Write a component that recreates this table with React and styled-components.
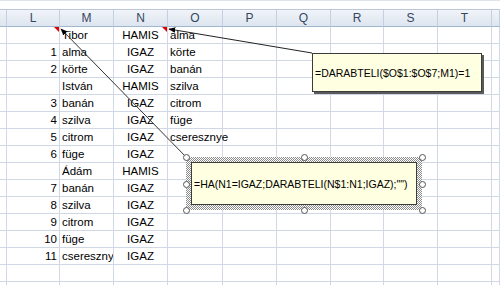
import React from "react";
import styled, { createGlobalStyle } from "styled-components";

const GlobalStyle = createGlobalStyle`
	body {
		margin: 0;
		background: #fff;
		font-family: "Liberation Sans", Arial, sans-serif;
		overflow: hidden;
	}
`;

const COLS = ["7px", "53px", "54px", "54px", "55px", "54px", "54px", "53px", "54px", "54px", "1fr"];
const LETTERS = ["", "L", "M", "N", "O", "P", "Q", "R", "S", "T", ""];

const rows = [
	["", "Tibor", "HAMIS", "alma"],
	["1", "alma", "IGAZ", "körte"],
	["2", "körte", "IGAZ", "banán"],
	["", "István", "HAMIS", "szilva"],
	["3", "banán", "IGAZ", "citrom"],
	["4", "szilva", "IGAZ", "füge"],
	["5", "citrom", "IGAZ", "cseresznye"],
	["6", "füge", "IGAZ", ""],
	["", "Ádám", "HAMIS", ""],
	["7", "banán", "IGAZ", ""],
	["8", "szilva", "IGAZ", ""],
	["9", "citrom", "IGAZ", ""],
	["10", "füge", "IGAZ", ""],
	["11", "cseresznye", "IGAZ", ""],
	["", "", "", ""],
	["", "", "", ""],
];

const Page = styled.div`
	position: relative;
	width: 500px;
	height: 285px;
	overflow: hidden;
	background: #fff;
	border-top: 1px solid #dfe4eb;
	box-sizing: border-box;
`;

const Spacer = styled.div`
	height: 8px;
`;

const Grid = styled.div`
	display: grid;
	grid-template-columns: ${COLS.join(" ")};
`;

const HeaderCell = styled.div`
	height: 18px;
	box-sizing: border-box;
	border-top: 1px solid #b9c7d9;
	border-bottom: 1px solid #9eb6ce;
	border-right: 1px solid #c3d0e1;
	background: linear-gradient(#f1f4f9, #dde5ef);
	color: #34475f;
	font-size: 12px;
	line-height: 16px;
	text-align: center;
`;

const Cell = styled.div`
	position: relative;
	height: 17px;
	box-sizing: border-box;
	border-right: 1px solid #d0d7e5;
	border-bottom: 1px solid #d0d7e5;
	font-size: 11.5px;
	line-height: 17px;
	color: #000;
	white-space: nowrap;
	padding: 0 2px;
	text-align: ${(p) => p.$align || "left"};
	overflow: ${(p) => (p.$spill ? "visible" : "hidden")};
`;

const Marker = styled.span`
	position: absolute;
	top: 0;
	right: 0;
	width: 0;
	height: 0;
	border-top: 5px solid #e00000;
	border-left: 5px solid transparent;
`;

const Arrows = styled.svg`
	position: absolute;
	left: 0;
	top: 0;
	pointer-events: none;
`;

const Note = styled.div`
	position: absolute;
	left: ${(p) => p.$x}px;
	top: ${(p) => p.$y}px;
	width: ${(p) => p.$w}px;
	height: ${(p) => p.$h}px;
	box-sizing: border-box;
	background: #ffffe1;
	border: 1px solid #3c3c3c;
	box-shadow: ${(p) => (p.$shadow ? "2px 2px 0 #5a5a5a" : "none")};
	display: flex;
	align-items: center;
	padding-left: 2px;
	font-size: 10.5px;
	color: #000;
	white-space: nowrap;
`;

const Frame = styled.div`
	position: absolute;
	left: 186px;
	top: 156px;
	width: 236px;
	height: 53px;
	background: repeating-conic-gradient(#8a8a8a 0 25%, #ffffff 0 50%) 0 0 / 2px 2px;
`;

const Handle = styled.span`
	position: absolute;
	left: ${(p) => p.$x - 3}px;
	top: ${(p) => p.$y - 3}px;
	width: 5px;
	height: 5px;
	border-radius: 50%;
	background: #fff;
	border: 1px solid #555;
`;

const handles = [
	[186, 156], [304, 156], [422, 156],
	[186, 183], [422, 183],
	[186, 209], [304, 209], [422, 209],
];

export default function App() {
	return (
		<>
			<GlobalStyle />
			<Page>
				<Spacer />
				<Grid>
					{LETTERS.map((l, i) => (
						<HeaderCell key={"h" + i}>{l}</HeaderCell>
					))}
					{rows.map((r, ri) =>
						COLS.map((_, ci) => {
							const key = ri + "-" + ci;
							if (ci === 1)
								return (
									<Cell key={key} $align="right">
										{r[0]}
										{ri === 0 && <Marker />}
									</Cell>
								);
							if (ci === 2) return <Cell key={key}>{r[1]}</Cell>;
							if (ci === 3)
								return (
									<Cell key={key} $align="center">
										{r[2]}
										{ri === 0 && <Marker />}
									</Cell>
								);
							if (ci === 4)
								return (
									<Cell key={key} $spill>
										{r[3]}
									</Cell>
								);
							return <Cell key={key} />;
						})
					)}
				</Grid>

				<Arrows width="500" height="285">
					<defs>
						<marker id="head" viewBox="0 0 10 10" refX="9" refY="5" markerWidth="7" markerHeight="7" orient="auto-start-reverse">
							<path d="M0 1 L10 5 L0 9 Z" fill="#000" />
						</marker>
					</defs>
					<line x1="312" y1="52" x2="169" y2="28" stroke="#222" strokeWidth="1" markerEnd="url(#head)" />
					<line x1="187" y1="157" x2="61" y2="28" stroke="#333" strokeWidth="1" markerEnd="url(#head)" />
				</Arrows>

				<Note $x={312} $y={52} $w={170} $h={39} $shadow>
					=DARABTELI($O$1:$O$7;M1)=1
				</Note>

				<Frame />
				<Note $x={191} $y={161} $w={226} $h={43}>
					=HA(N1=IGAZ;DARABTELI(N$1:N1;IGAZ);"")
				</Note>
				{handles.map(([x, y], i) => (
					<Handle key={i} $x={x} $y={y} />
				))}
			</Page>
		</>
	);
}
